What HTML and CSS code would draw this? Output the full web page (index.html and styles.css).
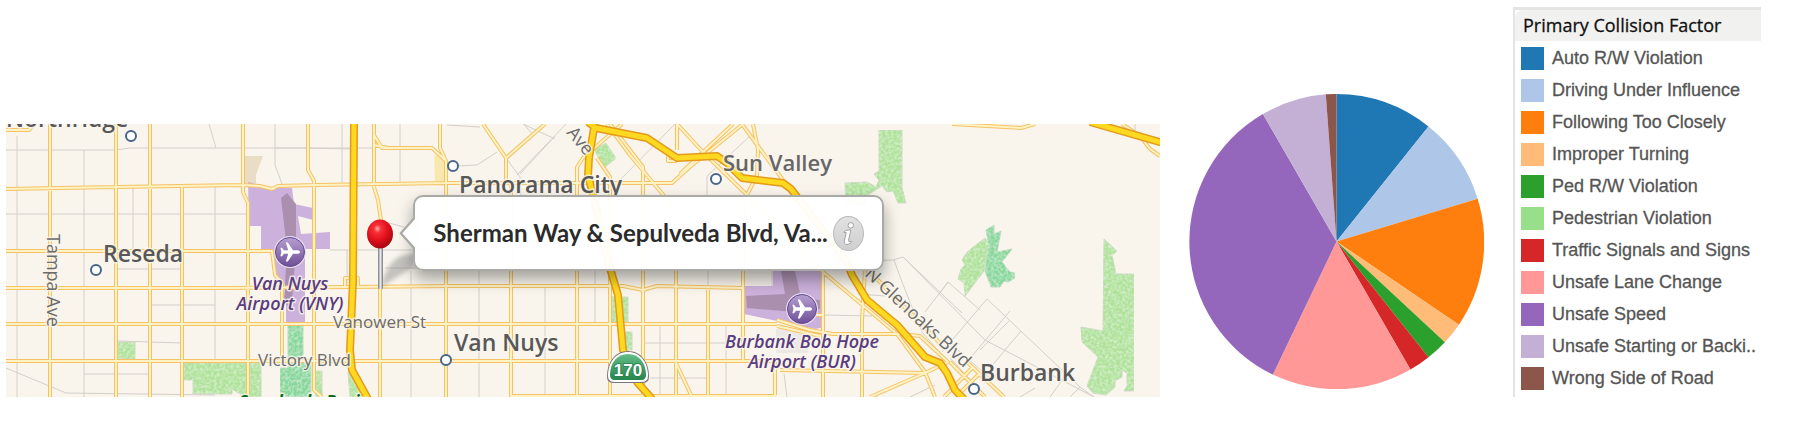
FILE: index.html
```
<!DOCTYPE html>
<html lang="en">
<head>
<meta charset="utf-8">
<title>Primary Collision Factor</title>
<link rel="stylesheet" href="styles.css">
</head>
<body>
<main class="report">
  <section class="map" aria-label="Map">
    <svg class="map-art" viewBox="6 124 1154 273" role="img" aria-label="Street map of Van Nuys and Burbank">
      <defs>
        <filter id="speckle" x="0" y="0" width="100%" height="100%">
          <feTurbulence type="fractalNoise" baseFrequency="0.35" numOctaves="2" result="n"/>
          <feColorMatrix in="n" values="0 0 0 0 1  0 0 0 0 1  0 0 0 0 1  0.9 0 0 0 -0.32" result="w"/>
          <feComposite in="w" in2="SourceGraphic" operator="in" result="s"/>
          <feMerge><feMergeNode in="SourceGraphic"/><feMergeNode in="s"/></feMerge>
        </filter>
        <radialGradient id="pinHead" cx=".4" cy=".32" r=".68">
          <stop offset="0" stop-color="#ffb0b0"/><stop offset=".2" stop-color="#f83038"/><stop offset=".6" stop-color="#e0101c"/><stop offset="1" stop-color="#a80810"/>
        </radialGradient>
        <linearGradient id="needle"><stop offset="0" stop-color="#777b84"/><stop offset=".5" stop-color="#e8eaee"/><stop offset="1" stop-color="#73767e"/></linearGradient>
        <linearGradient id="badge" x2="0" y2="1"><stop offset="0" stop-color="#b7a0d2"/><stop offset="1" stop-color="#6d4f96"/></linearGradient>
        <linearGradient id="shield" x2="0" y2="1"><stop offset="0" stop-color="#62bd87"/><stop offset="1" stop-color="#26854c"/></linearGradient>
        <filter id="soft"><feGaussianBlur stdDeviation="2"/></filter>
        <g id="airport">
          <circle r="16" fill="#e9e0f2"/><circle r="14.500" fill="url(#badge)" stroke="#65498c"/>
          <path fill="#fff" d="M10 0C10-1.300 8.500-1.800 7-1.800H3L-2.200-9.500H-4.200L-1.800-1.800H-6L-8-4.300H-9.600L-8.600 0L-9.600 4.300H-8L-6 1.800H-1.800L-4.200 9.500H-2.200L3 1.800H7C8.500 1.800 10 1.300 10 0Z"/>
        </g>
        <path id="streets" d="M6 130H29L34 124M6 189L116 187L243 185L260 186L272 189L278 186L316 185L447 183H672L691 166L743 124
          M6 251H272L275 275L282 283V361M6 288H230L350 287L450 286H623L643 290L657 286L743 288M6 324H777M6 361H777M512 396H777
          M50 124V397M116 124V397M150 124V397M182 187V397M243 124V192L248 203V397M308 124V170L314 181V390L322 397
          M374 124V187L378 200L381 220M380 280V397M374 135L382 148H432L446 161M440 124V148L446 161V397
          M483 124L506 158V183M506 158L545 124M511 183V397M577 200V167L583 158L622 124M577 270V397
          M597 158L610 177V397M610 124L643 167V397M607 124L630 155L665 197L675 211
          M677 124V150M676 270V397M677 124L703 152L747 195L823 272L897 334L925 372L935 397M703 152L733 124M703 152L680 174
          M668 156V161H677M708 286V397M743 195V361M753 124L758 150L757 175L747 195M742 124L755 142L783 180
          M777 320L810 330L833 334H900L920 336L948 362L925 373L870 397M823 272V397M865 270L862 320V397M775 361V397
          M780 370L925 373M675 361L692 397M777 326L820 336M815 315H823M345 287V278H358V287M374 145L388 148
          M950 362L968 380L985 397M967 362L1004 397M944 397L972 368M956 397L980 373M952 124L1021 128L1035 124M1122 124L1140 136L1150 149L1160 156
          M870 272L940 343"/>
        <path id="freeways" d="M354 124L353 280L350 350L352 370L368 399M588 122L596 128L647 138L677 158L717 156L727 163L742 178L783 183L791 189L847 262L852 275L867 300L897 325L925 357L940 363L947 373L955 390L964 399
          M594 128L589 158L588 175L593 195L610 268L618 295L623 350L637 382L652 399M1090 122L1163 143"/>
      </defs>

      <rect x="6" y="124" width="1154" height="273" fill="#f9f5ed"/>

      <path class="sand" d="M245 156H263L256 175V183H245Z"/>
      <path class="sand-light" d="M434 155H446V182H435Z"/>
      <g class="airfield">
        <path d="M248 182L270 187L292 188L294 204L313 208V220L298 216L301 234L330 232V249H305V322H286V285L275 280L271 250H261V226H249Z"/>
        <path d="M744 271H821V328L815 329L744 314Z"/>
      </g>
      <path class="runway" d="M281 198L287 193L296 204V250L291 312L284 300L287 250ZM746 296L785 294L781 271H795L801 298L820 300V309L795 312L747 308Z"/>
      <path fill="#f1ece6" d="M744 271H773V286H744Z"/>
      <path fill="#ebe8e6" d="M776 329H808V353H776Z"/>
      <g class="park" filter="url(#speckle)">
        <path d="M118 342H135V359H118ZM184 363H261V397H245L232 389V394H193V380H184ZM313 371H322V397H316ZM348 372L366 397H350ZM594 149L606 143L616 158L604 168ZM612 297H628V322H612ZM624 332H632V350H624ZM845 183L867 182L876 187L879 180L874 174L879 171V130H902V188L906 203H898L893 191L887 192L882 186L866 196V205H846ZM985 238L989 243L984 271L965 296L964 283L958 279L961 269L965 265L962 260L967 252ZM1104 239L1117 251L1112 255L1116 274H1134V391H1124L1127 386V373L1122 370V377L1115 381V387L1106 395L1093 393L1087 386L1098 357L1082 342L1081 327L1103 331Z"/>
      </g>
      <g class="park-deep" filter="url(#speckle)">
        <path d="M288 325H303V360H311V397H280V368H288ZM986 230L994 225V234L1001 231L997 252L1012 249L1002 262L1010 272L1015 273V278L1008 282L1004 281L1000 287H991L985 271L989 245Z"/>
      </g>

      <path class="lanes" d="M17 136V397M6 150H116L130 148H300L354 149M84 150V397M133 187V251M209 124L216 148M275 124V165L282 184M215 187V361M6 214H248M116 269H182M150 305H215M118 341L182 343M84 374H150M6 368L66 393L215 395
        M276 148H374M342 124V183M400 124V183M447 125L480 127M330 250H446M347 250V287M385 222L404 227M385 268H440M411 271V397M479 271V397M455 166L477 165L497 152M523 124L555 139M517 175L597 92M506 158L520 177L521 195M545 288V397M595 271V324M446 195L500 213L510 203
        M555 136L520 174M524 124L532 134M707 195V176L750 136M620 180L675 124M708 271V286M645 343H740M660 324V397M726 324V397M650 378H706M760 365V361M772 271V286M835 262L893 260L903 257L962 313M894 260L902 282L922 332
        M925 312L948 282L980 310M948 282L940 293M922 332L948 362M903 257L985 340L1094 397M967 362L1010 311M987 299L1080 387L1094 397M987 299L942 352M1009 321L980 350M1021 331L990 368M1080 387L1070 397M1068 372L1050 397M1035 388L1020 397M950 358L980 390M958 350L992 380M825 315L872 316M858 294L885 296M784 374L787 397M910 397L935 385M1135 124V135"/>
      <use href="#streets" class="street-edge"/>
      <use href="#streets" class="street-core"/>
      <use href="#freeways" class="freeway-edge"/>
      <use href="#freeways" class="freeway-core"/>

      <g class="stops">
        <circle cx="131" cy="136" r="5"/><circle cx="96" cy="270" r="5"/><circle cx="453" cy="166" r="5"/><circle cx="446" cy="360" r="5"/><circle cx="716" cy="179" r="5"/><circle cx="974" cy="389" r="5"/>
      </g>
      <use href="#airport" x="290" y="252"/>
      <use href="#airport" x="802" y="309"/>

      <g class="town">
        <text x="6" y="127">Northridge</text>
        <text x="103" y="262">Reseda</text>
        <text x="459" y="193">Panorama City</text>
        <text x="454" y="351">Van Nuys</text>
        <text x="980" y="381">Burbank</text>
        <text x="723" y="171" class="town-small">Sun Valley</text>
      </g>
      <g class="airport-name">
        <text x="290" y="290">Van Nuys</text><text x="290" y="310">Airport (VNY)</text>
        <text x="802" y="348">Burbank Bob Hope</text><text x="802" y="368">Airport (BUR)</text>
      </g>
      <g class="road-name">
        <text x="333" y="328">Vanowen St</text>
        <text x="258" y="366">Victory Blvd</text>
        <g class="road-name-turned">
          <text transform="translate(47 234) rotate(90)">Tampa Ave</text>
          <text transform="translate(864 275) rotate(43)">N Glenoaks Blvd</text>
          <text transform="translate(566 133) rotate(50)">Ave</text>
        </g>
      </g>
      <text class="park-name" x="239" y="408">Sepulveda Basin</text>

      <path d="M628 351C641 351 649 362 649 377Q649 383 642 383H614Q607 383 607 377C607 362 615 351 628 351Z" fill="#777"/>
      <path d="M628 352C640 352 648 362 648 376Q648 382 641 382H615Q608 382 608 376C608 362 616 352 628 352Z" fill="#fff"/>
      <path d="M628 354C639 354 646 363 646 375Q646 380 641 380H615Q610 380 610 375C610 363 617 354 628 354Z" fill="url(#shield)"/>
      <text class="shield-number" x="628" y="376">170</text>

      <path d="M381 287Q386 263 401 256L415 253V266Z" fill="#777" opacity=".4" filter="url(#soft)"/>
      <rect x="378" y="246" width="5" height="43" rx="1" fill="url(#needle)"/>
      <ellipse cx="380" cy="234" rx="13" ry="14.500" fill="url(#pinHead)"/>
    </svg>
    <div class="callout">
      <span class="callout-title">Sherman Way &amp; Sepulveda Blvd, Va...</span>
      <button class="info" type="button" aria-label="More information">
        <svg viewBox="0 0 32 36" aria-hidden="true"><circle cx="18.500" cy="9" r="3" /><path d="M11.500 15.500C13 14.500 15.500 14 18.500 14L16 25.500Q15.500 28 19 26.500L18.500 28.500Q16 30.500 13 30Q10.500 29.500 11.500 25.500L13.500 17L11 16.800Z"/></svg>
      </button>
    </div>
  </section>

  <svg class="pie" viewBox="28 29 882 882" role="img" aria-label="Collisions by primary factor">
    <path fill="#1f77b4" d="M469 470V29A441 441 0 0 1 744 126Z"/>
    <path fill="#aec7e8" d="M469 470L744 126A441 441 0 0 1 891 342Z"/>
    <path fill="#ff7f0e" d="M469 470L891 342A441 441 0 0 1 835 719Z"/>
    <path fill="#ffbb78" d="M469 470L835 719A441 441 0 0 1 793 771Z"/>
    <path fill="#2ca02c" d="M469 470L793 771A441 441 0 0 1 744 816Z"/>
    <path fill="#d62728" d="M469 470L744 816A441 441 0 0 1 690 853Z"/>
    <path fill="#ff9896" d="M469 470L690 853A441 441 0 0 1 279 868Z"/>
    <path fill="#9467bd" d="M469 470L279 868A441 441 0 0 1 249 89Z"/>
    <path fill="#c5b0d5" d="M469 470L249 89A441 441 0 0 1 437 30Z"/>
    <path fill="#8c564b" d="M469 470L437 30A441 441 0 0 1 469 29Z"/>
  </svg>

  <aside class="legend">
    <h2 class="legend-title">Primary Collision Factor</h2>
    <ul class="legend-list">
      <li class="auto">Auto R/W Violation</li>
      <li class="dui">Driving Under Influence</li>
      <li class="following">Following Too Closely</li>
      <li class="turning">Improper Turning</li>
      <li class="ped-row">Ped R/W Violation</li>
      <li class="pedestrian">Pedestrian Violation</li>
      <li class="signals">Traffic Signals and Signs</li>
      <li class="lane">Unsafe Lane Change</li>
      <li class="speed">Unsafe Speed</li>
      <li class="starting">Unsafe Starting or Backi..</li>
      <li class="wrong-side">Wrong Side of Road</li>
    </ul>
  </aside>
</main>
</body>
</html>
```
FILE: styles.css
```
* { box-sizing: border-box; }
body { margin: 0; background: #fff; font-family: "Liberation Sans", Arial, sans-serif; }

.report {
  display: grid;
  grid-template-columns: 1154fr 295fr 248fr;
  column-gap: 29px;
  align-items: end;
  padding: 7px 36px 0 6px;
}

/* Map */
.map { position: relative; }
.map-art { display: block; width: 100%; font-family: "Open Sans", "Noto Sans", sans-serif; }
.sand { fill: #eaddc6; }
.sand-light { fill: #f9e8ae; }
.airfield { fill: #ccb1dc; }
.runway { fill: #ab8fae; }
.park { fill: #aee298; stroke: #c9d6bd; }
.park-deep { fill: #84d799; stroke: #b5d6b8; }
.lanes { fill: none; stroke: #d3d0ca; stroke-width: 1; }
.street-edge, .street-core, .freeway-edge, .freeway-core { fill: none; stroke-linejoin: round; }
.street-edge { stroke: #f6c264; stroke-width: 4; }
.street-core { stroke: #fdf2c4; stroke-width: 2; }
.freeway-edge { stroke: #e39a1d; stroke-width: 8; }
.freeway-core { stroke: #ffd91f; stroke-width: 5; }
.stops { fill: #fff; stroke: #48658a; stroke-width: 2; }
.map-art text { paint-order: stroke; stroke: #f9f5ed; stroke-width: 3px; stroke-linejoin: round; stroke-opacity: .8; }
.town { font-size: 23px; font-weight: 600; fill: #585858; }
.town .town-small { font-size: 22px; fill: #666; }
.airport-name { font-size: 18px; font-weight: 600; font-style: italic; fill: #5a3c80; text-anchor: middle; }
.road-name { font-size: 17px; fill: #6b6b6b; }
.road-name-turned { font-size: 18px; }
.park-name { font-size: 17px; font-weight: 700; font-style: italic; fill: #0b6b1b; }
.map-art .shield-number { font-family: "Liberation Sans", Arial, sans-serif; font-size: 17px; font-weight: 700; fill: #fff; stroke: #26854c; stroke-width: 2px; text-anchor: middle; }

/* Callout over the map */
.callout {
  position: absolute;
  left: 35.3%;
  top: 26%;
  width: 40.8%;
  height: 28%;
  display: flex;
  align-items: center;
  justify-content: space-between;
  padding: 0 18px 0 18px;
  border: 2px solid #a9a9a5;
  border-radius: 10px;
  background: rgba(255, 255, 255, .96);
  box-shadow: 0 8px 16px rgba(0, 0, 0, .35);
}
.callout::before, .callout::after {
  content: "";
  position: absolute;
  top: 50%;
  right: 100%;
  width: 16px;
  height: 36px;
  margin-top: -18px;
  background: #a9a9a5;
  clip-path: polygon(100% 0, 0 50%, 100% 100%);
}
.callout::after { margin-right: -3px; background: #fefefe; }
.callout-title { font-family: Lato, "Open Sans", sans-serif; font-size: 24px; font-weight: 700; line-height: 32px; color: #2b2b2b; white-space: nowrap; }
.info { width: 31px; height: 35px; flex: none; padding: 0; border: 1px solid #b9b9b9; border-radius: 50%; background: linear-gradient(#e2e2e2, #cfcfcf); }
.info svg { display: block; width: 100%; height: 100%; fill: #fff; stroke: #9a9a9a; stroke-width: 1; }

/* Chart */
.pie { display: block; width: 100%; margin-bottom: 8px; }

/* Legend */
.legend { border-top: 3px solid #e4e4e4; border-left: 2px solid #e4e4e4; }
.legend-title {
  margin: 0;
  padding: 0 8px;
  border-radius: 8px 0 0 0;
  background: #f1f1ef;
  font-family: "Open Sans", "Noto Sans", sans-serif;
  font-size: 18px;
  font-weight: 400;
  line-height: 31px;
  color: #111;
  -webkit-text-stroke: 0.3px #111;
}
.legend-list { margin: 0; padding: 1px 0 3px 6px; list-style: none; }
.legend-list li { display: flex; align-items: center; gap: 8px; font-size: 18px; line-height: 32px; color: #555; white-space: nowrap; -webkit-text-stroke: 0.3px #555; }
.legend-list li::before { content: ""; width: 23px; height: 23px; flex: none; background: currentColor; }
.legend-list .auto::before { background: #1f77b4; }
.legend-list .dui::before { background: #aec7e8; }
.legend-list .following::before { background: #ff7f0e; }
.legend-list .turning::before { background: #ffbb78; }
.legend-list .ped-row::before { background: #2ca02c; }
.legend-list .pedestrian::before { background: #98df8a; }
.legend-list .signals::before { background: #d62728; }
.legend-list .lane::before { background: #ff9896; }
.legend-list .speed::before { background: #9467bd; }
.legend-list .starting::before { background: #c5b0d5; }
.legend-list .wrong-side::before { background: #8c564b; }
```
